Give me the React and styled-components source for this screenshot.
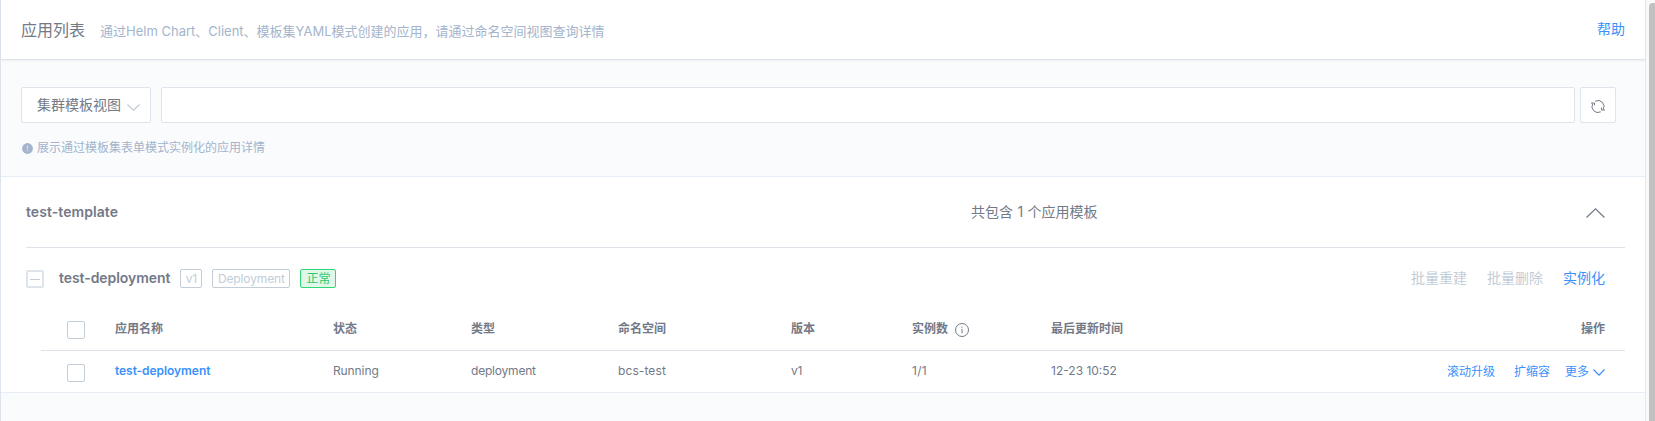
import React from 'react';
import styled, { createGlobalStyle } from 'styled-components';

const GlobalStyle = createGlobalStyle`
  *, *::before, *::after { box-sizing: border-box; }
  body {
    margin: 0;
    background: #fafbfd;
    color: #737987;
    font: 14px/1 Inter, "Noto Sans CJK SC", sans-serif;
    overflow: hidden;
  }
`;

const Page = styled.div`
  display: flex;
  height: 421px;
  border-left: 1px solid #dde4eb;
`;

const Main = styled.main`
  flex: 1;
  min-width: 0;
`;

const ScrollTrack = styled.div`
  width: 10px;
  padding: 3px 0 0 3px;
  background: #fafafa;
  border-left: 1px solid #e8e8e8;
`;

const ScrollThumb = styled.div`
  height: 100%;
  background: #c1c1c1;
  border-top-left-radius: 4px;
`;

const Header = styled.header`
  position: relative;
  display: flex;
  align-items: center;
  height: 60px;
  padding: 0 20px;
  background: #fff;
  border-bottom: 1px solid #dde4eb;
  box-shadow: 0 1px 2px rgba(0, 0, 0, 0.06);
`;

const Title = styled.h1`
  margin: 1px 15px 0 0;
  font-size: 16px;
  line-height: 24px;
  font-weight: 400;
`;

const Description = styled.p`
  margin: 3px 0 0;
  font-size: 13px;
  line-height: 20px;
  color: #a3b4cc;
`;

const Link = styled.a`
  font-size: ${(p) => p.$size || 14}px;
  line-height: 20px;
  color: ${(p) => (p.$disabled ? '#c3cdd7' : '#3a91fb')};
  white-space: nowrap;
`;

const HelpLink = styled(Link)`
  margin: 0 0 2px auto;
`;

const Filters = styled.section`
  height: 117px;
  padding: 27px 29px 0 20px;
  border-bottom: 1px solid #e6edf4;
`;

const FilterRow = styled.div`
  display: flex;
  height: 36px;
`;

const Select = styled.div`
  display: flex;
  align-items: center;
  width: 130px;
  margin-right: 10px;
  padding-left: 15px;
  gap: 6px;
  background: #fff;
  border: 1px solid #dde4eb;
  border-radius: 2px;
  svg { margin-top: 4px; }
`;

const SearchBox = styled.div`
  flex: 1;
  margin-right: 5px;
  background: #fff;
  border: 1px solid #dde4eb;
  border-radius: 2px;
`;

const RefreshButton = styled.button`
  display: flex;
  align-items: center;
  justify-content: center;
  width: 36px;
  padding: 2px 0 0;
  color: #737987;
  background: #fff;
  border: 1px solid #dde4eb;
  border-radius: 2px;
`;

const Hint = styled.p`
  display: flex;
  align-items: center;
  gap: 4px;
  margin: 15px 0 0 1px;
  font-size: 12px;
  line-height: 20px;
  color: #a3b4cc;
  svg { margin-top: 1px; }
`;

const Panel = styled.section`
  height: 216px;
  padding: 0 20px 0 25px;
  background: #fff;
  border-bottom: 1px solid #e6edf4;
`;

const TemplateHead = styled.div`
  display: grid;
  grid-template-columns: 945px 1fr 20px;
  align-items: center;
  height: 71px;
  padding-right: 20px;
  border-bottom: 1px solid #dfe3e9;
`;

const Count = styled.span`
  word-spacing: 0.5px;
`;

const Name = styled.strong`
  font-weight: 600;
  line-height: 20px;
  letter-spacing: ${(p) => p.$spacing || 0}px;
`;

const DeploymentHead = styled.div`
  display: flex;
  align-items: center;
  height: 60px;
  padding-right: 20px;
`;

const Toggle = styled.div`
  display: flex;
  align-items: center;
  justify-content: center;
  width: 18px;
  height: 18px;
  margin: 2px 15px 0 0;
  border: 2px solid #dde4eb;
  border-radius: 2px;
  &::after {
    content: '';
    width: 10px;
    height: 1px;
    background: #c3cdd7;
  }
`;

const Tag = styled.span`
  width: ${(p) => p.$width}px;
  height: 19px;
  margin: 1px 0 0 10px;
  font-size: 12px;
  line-height: 17px;
  letter-spacing: -0.12px;
  text-align: center;
  color: ${(p) => (p.$ok ? '#2dcb70' : '#c3cdd7')};
  background: ${(p) => (p.$ok ? '#e0f7e9' : '#fff')};
  border: 1px solid ${(p) => (p.$ok ? '#2fd875' : '#c3cdd7')};
  border-radius: 2px;
`;

const BatchActions = styled.div`
  display: flex;
  gap: 20px;
  margin-left: auto;
`;

const Table = styled.div`
  margin-left: 15px;
  font-size: 12px;
`;

const Row = styled.div`
  display: grid;
  grid-template-columns: 74px 218px 138px 147px 173px 121px 139px 1fr;
  align-items: center;
  height: ${(p) => (p.$head ? 43 : 41)}px;
  padding-right: 20px;
  line-height: 18px;
  font-weight: ${(p) => (p.$head ? 700 : 400)};
  border-bottom: ${(p) => (p.$head ? '1px solid #dfe3e9' : '0')};
`;

const Checkbox = styled.div`
  width: 18px;
  height: 18px;
  margin: ${(p) => p.$top}px 0 0 26px;
  border: 1px solid #c3cdd7;
  border-radius: 2px;
`;

const Cell = styled.div`
  display: flex;
  align-items: center;
  gap: 7px;
  height: 18px;
  margin-bottom: ${(p) => (p.$head ? 0 : 2)}px;
  letter-spacing: ${(p) => p.$spacing || 0}px;
`;

const LastCells = styled.div`
  display: flex;
  justify-content: space-between;
  align-items: center;
  height: 18px;
  margin-bottom: ${(p) => (p.$head ? 0 : 2)}px;
`;

const RowActions = styled.div`
  display: flex;
  align-items: center;
  margin-top: 2px;
`;

const RowLink = styled(Link)`
  margin-right: ${(p) => p.$gap}px;
`;

const AppName = styled.a`
  color: #3a91fb;
  font-weight: 600;
  letter-spacing: -0.06px;
`;

const Chevron = ({ w, h, color, up }) => (
  <svg width={w} height={h} viewBox={`0 0 ${w} ${h}`} fill="none" stroke={color} strokeWidth="1.25">
    <path d={up ? `M.5 ${h - 0.5}L${w / 2} .9L${w - 0.5} ${h - 0.5}` : `M.5 .5L${w / 2} ${h - 0.9}L${w - 0.5} .5`} />
  </svg>
);

const RefreshIcon = () => (
  <svg width="14" height="13" viewBox="0 0 14 13" fill="none" stroke="currentColor">
    <path d="M4.2 1.2A6 6 0 0 1 12.2 9.5M9.8 11.8A6 6 0 0 1 1.8 3.5" />
    <path d="M0 3H3.5V5.4M14 10H10.5V7.6" />
  </svg>
);

const AlertIcon = () => (
  <svg width="11" height="11" viewBox="0 0 11 11">
    <circle cx="5.5" cy="5.5" r="5.4" fill="#a3b4cc" />
    <path d="M5.5 2.5V6.3M5.5 7.3V8.4" stroke="#d5deea" strokeWidth="1.2" />
  </svg>
);

const InfoIcon = () => (
  <svg width="14" height="14" viewBox="0 0 14 14" fill="none" stroke="#737987">
    <circle cx="7" cy="7" r="6.5" />
    <path d="M7 5.8V10.3M7 3.6V4.8" />
  </svg>
);

const IconSlot = styled.span`
  display: flex;
  margin-top: ${(p) => p.$top}px;
  margin-left: ${(p) => p.$left || 0}px;
`;

export default function App() {
  return (
    <>
      <GlobalStyle />
      <Page>
        <Main>
          <Header>
            <Title>应用列表</Title>
            <Description>通过Helm Chart、Client、模板集YAML模式创建的应用，请通过命名空间视图查询详情</Description>
            <HelpLink>帮助</HelpLink>
          </Header>
          <Filters>
            <FilterRow>
              <Select>
                集群模板视图
                <Chevron w={13} h={7} color="#c3cdd7" />
              </Select>
              <SearchBox />
              <RefreshButton aria-label="刷新"><RefreshIcon /></RefreshButton>
            </FilterRow>
            <Hint>
              <AlertIcon />
              展示通过模板集表单模式实例化的应用详情
            </Hint>
          </Filters>
          <Panel>
            <TemplateHead>
              <Name $spacing={0.06}>test-template</Name>
              <Count>共包含 1 个应用模板</Count>
              <IconSlot $top={2} $left={1}><Chevron w={19} h={10} color="#737987" up /></IconSlot>
            </TemplateHead>
            <DeploymentHead>
              <Toggle />
              <Name $spacing={-0.06}>test-deployment</Name>
              <Tag $width={22}>v1</Tag>
              <Tag $width={78}>Deployment</Tag>
              <Tag $width={36} $ok>正常</Tag>
              <BatchActions>
                <Link $disabled>批量重建</Link>
                <Link $disabled>批量删除</Link>
                <Link>实例化</Link>
              </BatchActions>
            </DeploymentHead>
            <Table>
              <Row $head>
                <Checkbox $top={1} />
                <Cell $head>应用名称</Cell>
                <Cell $head>状态</Cell>
                <Cell $head>类型</Cell>
                <Cell $head>命名空间</Cell>
                <Cell $head>版本</Cell>
                <Cell $head>实例数<IconSlot $top={2}><InfoIcon /></IconSlot></Cell>
                <LastCells $head><span>最后更新时间</span><span>操作</span></LastCells>
              </Row>
              <Row>
                <Checkbox $top={3} />
                <Cell><AppName>test-deployment</AppName></Cell>
                <Cell $spacing={-0.1}>Running</Cell>
                <Cell $spacing={-0.2}>deployment</Cell>
                <Cell $spacing={0.1}>bcs-test</Cell>
                <Cell $spacing={-0.3}>v1</Cell>
                <Cell $spacing={0.3}>1/1</Cell>
                <LastCells>
                  <span>12-23 10:52</span>
                  <RowActions>
                    <RowLink $size={12} $gap={19}>滚动升级</RowLink>
                    <RowLink $size={12} $gap={15}>扩缩容</RowLink>
                    <RowLink $size={12} $gap={4}>更多</RowLink>
                    <IconSlot $top={2}><Chevron w={12} h={7} color="#3a91fb" /></IconSlot>
                  </RowActions>
                </LastCells>
              </Row>
            </Table>
          </Panel>
        </Main>
        <ScrollTrack><ScrollThumb /></ScrollTrack>
      </Page>
    </>
  );
}
